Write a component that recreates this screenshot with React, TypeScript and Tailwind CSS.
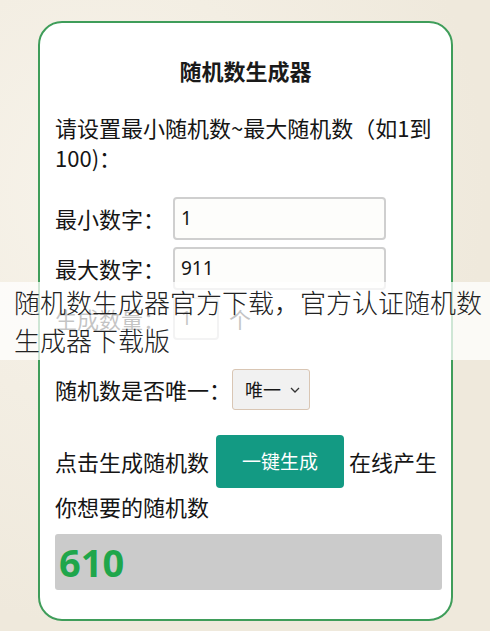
import React from "react";

const cjk = { fontFamily: '"Noto Sans CJK SC", "Noto Sans", sans-serif' };

export default function App() {
  return (
    <div className="relative w-[490px] h-[631px] bg-[#f3efe5] overflow-hidden" style={cjk}>
      <div className="absolute inset-0 bg-[radial-gradient(ellipse_at_20%_30%,#f7f3ea_0%,#efe9dc_70%)]" />
      <div className="relative pt-[21px] pl-[38px]">
        <div className="w-[415px] h-[600px] rounded-[24px] border-2 border-[#3f9d5a] bg-white pl-[15px] pt-[32px] text-[#151515]">
          <div className="text-center text-[22px] leading-[30px] font-bold pr-[15px] text-[#1a1a1a]">随机数生成器</div>
          <div className="mt-[27px] text-[22px] leading-[30px] pr-[10px]">
            请设置最小随机数~最大随机数（如1到100)：
          </div>

          <div className="mt-[25px] flex flex-col gap-[7px]">
            <div className="flex items-center h-[43px]">
              <span className="w-[118px] text-[22px]">最小数字：</span>
              <div className="w-[213px] h-[43px] rounded-[4px] border-2 border-[#cfcfcf] bg-[#fdfdfb] flex items-center px-[6px] text-[19px]" style={{ fontFamily: '"Noto Sans", sans-serif' }}>1</div>
            </div>
            <div className="flex items-center h-[43px]">
              <span className="w-[118px] text-[22px]">最大数字：</span>
              <div className="w-[213px] h-[43px] rounded-[4px] border-2 border-[#cfcfcf] bg-[#fdfdfb] flex items-center px-[6px] text-[19px]" style={{ fontFamily: '"Noto Sans", sans-serif' }}>911</div>
            </div>
            <div className="flex items-center h-[43px]">
              <span className="w-[118px] text-[22px]">生成数量：</span>
              <div className="w-[46px] h-[43px] rounded-[4px] border-2 border-[#cfcfcf] bg-[#fdfdfb] flex items-center px-[6px] text-[19px]" style={{ fontFamily: '"Noto Sans", sans-serif' }}>1</div>
              <span className="ml-[10px] text-[22px]">个</span>
            </div>
          </div>

          <div className="mt-[29px] flex items-center h-[41px]">
            <span className="text-[22px] w-[177px]">随机数是否唯一：</span>
            <div className="w-[78px] h-[41px] rounded-[3px] border border-[#d9c6b4] bg-[#f1f1f1] flex items-center pl-[12px] gap-[8px]">
              <span className="text-[18px]">唯一</span>
              <svg width="12" height="8" viewBox="0 0 12 8" fill="none">
                <path d="M2 2l4 4 4-4" stroke="#333" strokeWidth="1.3" />
              </svg>
            </div>
          </div>

          <div className="mt-[25px] flex items-center h-[53px]">
            <span className="text-[22px]">点击生成随机数</span>
            <div className="ml-[7px] w-[128px] h-[53px] rounded-[4px] bg-[#139a83] flex items-center justify-center text-white text-[19px]">一键生成</div>
            <span className="ml-[5px] text-[22px]">在线产生</span>
          </div>

          <div className="mt-[3px] text-[22px] leading-[30px]">你想要的随机数</div>

          <div className="mt-[13px] w-[387px] h-[56px] rounded-[3px] bg-[#cbcbcb] flex items-center pl-[4px]">
            <span className="text-[38px] font-bold text-[#1fa64b] leading-none" style={{ fontFamily: '"Noto Sans", sans-serif' }}>610</span>
          </div>
        </div>
      </div>

      <div className="absolute left-0 top-[282px] w-[490px] h-[78px] bg-white/75 pl-[14px] pt-[1px]">
        <div className="text-[26px] leading-[38px] font-light text-[#222]">随机数生成器官方下载，官方认证随机数生成器下载版</div>
      </div>
    </div>
  );
}
